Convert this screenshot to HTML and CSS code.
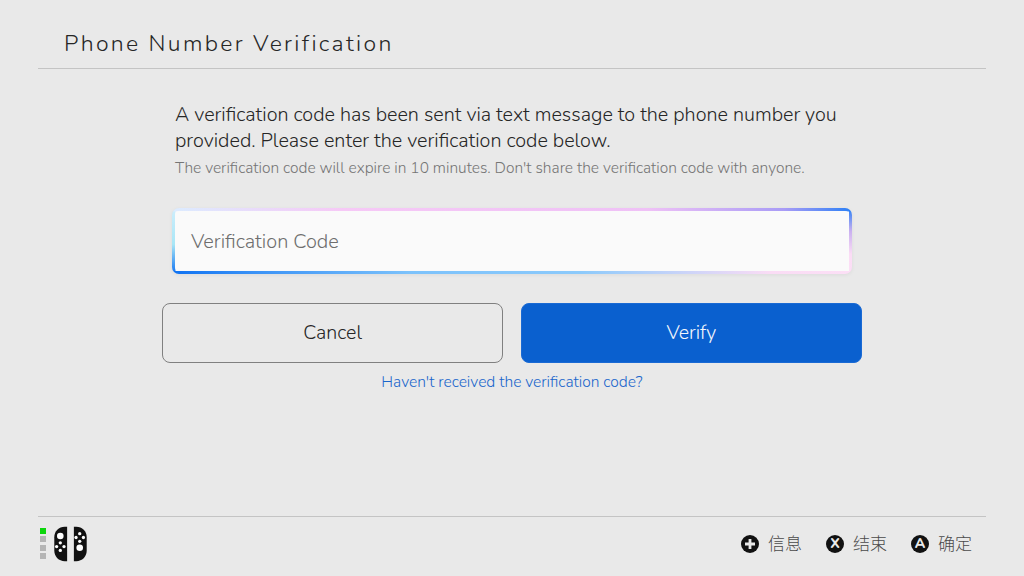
FILE: index.html
```html
<!DOCTYPE html>
<html lang="en">
<head>
<meta charset="utf-8">
<title>Phone Number Verification</title>
<link rel="stylesheet" href="styles.css">
</head>
<body>
<div class="screen">
  <header class="header"><h1 class="title">Phone Number Verification</h1></header>
  <main class="main">
    <div class="message">
      <p class="lead">A verification code has been sent via text message to the phone number you provided. Please enter the verification code below.</p>
      <p class="note">The verification code will expire in 10 minutes. Don't share the verification code with anyone.</p>
    </div>
    <div class="field"><div class="field-inner">Verification Code</div></div>
    <div class="actions">
      <div class="btn btn-cancel">Cancel</div>
      <div class="btn btn-verify">Verify</div>
    </div>
    <div class="link">Haven't received the verification code?</div>
  </main>
  <footer class="footer">
    <div class="status">
      <div class="leds"><i class="led on"></i><i class="led"></i><i class="led"></i><i class="led"></i></div>
      <svg class="joycon" width="33" height="36" viewBox="0 0 34 36">
        <path fill="#111" d="M13.500 0.300V35.700H11C5 35.700 0.300 31 0.300 25V11C0.300 5 5 0.300 11 0.300Z"/>
        <path fill="#111" d="M20.500 0.300V35.700H23C29 35.700 33.700 31 33.700 25V11C33.700 5 29 0.300 23 0.300Z"/>
        <circle cx="6.500" cy="9.800" r="3.400" fill="#fff"/>
        <circle cx="6.500" cy="16.800" r="1.700" fill="#fff"/><circle cx="6.500" cy="24.600" r="1.700" fill="#fff"/>
        <circle cx="2.700" cy="20.700" r="1.700" fill="#fff"/><circle cx="10.300" cy="20.700" r="1.700" fill="#fff"/>
        <circle cx="26.500" cy="21.800" r="3.400" fill="#fff"/>
        <circle cx="26.500" cy="7.400" r="1.700" fill="#fff"/><circle cx="26.500" cy="15.200" r="1.700" fill="#fff"/>
        <circle cx="22.700" cy="11.300" r="1.700" fill="#fff"/><circle cx="30.300" cy="11.300" r="1.700" fill="#fff"/>
      </svg>
    </div>
    <div class="hints">
      <div class="hint"><span class="key"><svg width="12" height="12" viewBox="0 0 12 12"><path d="M6 1V11M1 6H11" stroke="#e9e9e9" stroke-width="2.800"/></svg></span><span class="hint-label">信息</span></div>
      <div class="hint"><span class="key">X</span><span class="hint-label">结束</span></div>
      <div class="hint"><span class="key">A</span><span class="hint-label">确定</span></div>
    </div>
  </footer>
</div>
</body>
</html>
```
FILE: styles.css
```css
* { box-sizing: border-box; }
html, body { margin: 0; padding: 0; }
body {
  width: 1024px;
  height: 576px;
  overflow: hidden;
  background: #e9e9e9;
  color: #262626;
  font-family: "Nunito", "Noto Sans", "Noto Sans CJK SC", sans-serif;
  font-weight: 300;
}
.screen {
  width: 1024px;
  height: 576px;
  padding: 0 38px;
  display: flex;
  flex-direction: column;
}
.header {
  height: 69px;
  flex: none;
  border-bottom: 1px solid #c4c4c4;
  padding: 29px 0 0 26px;
}
.title {
  margin: 0;
  font-size: 23px;
  line-height: 30px;
  font-weight: 300;
  letter-spacing: 2.330px;
}
.main {
  flex: 1;
  display: flex;
  flex-direction: column;
  align-items: center;
}
.message {
  width: 674px;
  margin-top: 33px;
}
.lead {
  margin: 0;
  font-size: 19.760px;
  line-height: 26px;
}
.note {
  margin: 4px 0 0;
  font-size: 15.500px;
  line-height: 20px;
  color: #757575;
}
.field {
  width: 680px;
  height: 66px;
  margin-top: 30px;
  padding: 3px;
  border-radius: 7px;
  background-color: #fafafa;
  background-repeat: no-repeat;
  background-image:
    linear-gradient(90deg, #dcecff 0%, #f6c9f6 25%, #efc1f6 70%, #a99cf6 90%, #2a80f6 100%),
    linear-gradient(90deg, #0f72f2 0%, #3a92f6 12%, #7cc2fb 35%, #8ccafb 60%, #cdd4f8 76%, #fadcf5 88%, #fcdff6 100%),
    linear-gradient(180deg, #cfeefc 0%, #a8e6f6 55%, #0f72f2 100%),
    linear-gradient(180deg, #2a80f6 0%, #c9b0f0 35%, #fbdcf5 70%, #fcdff6 100%);
  background-size: 100% 3.500px, 100% 3.500px, 3.500px 100%, 3.500px 100%;
  background-position: top, bottom, left, right;
  box-shadow: 0 1px 4px rgba(0, 0, 0, 0.06);
}
.field-inner {
  height: 100%;
  border-radius: 4px;
  background: #fafafa;
  padding-left: 16px;
  font-size: 19.900px;
  line-height: 62px;
  color: #6e6e6e;
}
.actions {
  display: flex;
  gap: 17.400px;
  margin-top: 29px;
}
.btn {
  width: 341.300px;
  height: 60px;
  border-radius: 8px;
  font-size: 19.600px;
  line-height: 58px;
  text-align: center;
}
.btn-cancel {
  border: 1px solid #808080;
}
.btn-verify {
  border: 1px solid #1a6ad4;
  background: #0a60cf;
  color: #f2f6fc;
}
.link {
  margin-top: 9px;
  font-size: 15.550px;
  line-height: 20px;
  color: #1a66cc;
}
.footer {
  height: 60px;
  flex: none;
  border-top: 1px solid #c4c4c4;
  display: flex;
  justify-content: space-between;
  align-items: center;
  padding: 0 14px 6px 2px;
}
.status {
  display: flex;
  align-items: center;
  gap: 8px;
}
.leds {
  display: flex;
  flex-direction: column;
  gap: 2.500px;
}
.led {
  display: block;
  width: 6px;
  height: 6px;
  background: #b4b4b4;
}
.led.on { background: #0cd60c; }
.joycon { display: block; }
.hints {
  display: flex;
  gap: 24px;
}
.hint {
  display: flex;
  align-items: center;
  gap: 9px;
}
.key {
  width: 18px;
  height: 18px;
  border-radius: 50%;
  background: #111;
  color: #e9e9e9;
  display: flex;
  align-items: center;
  justify-content: center;
  font-size: 14px;
  font-weight: 800;
}
.key svg { display: block; }
.hint-label {
  font-family: "Noto Sans CJK SC", sans-serif;
  font-size: 17px;
  line-height: 22px;
  padding-bottom: 1px;
  color: #4a4a4a;
}
```
